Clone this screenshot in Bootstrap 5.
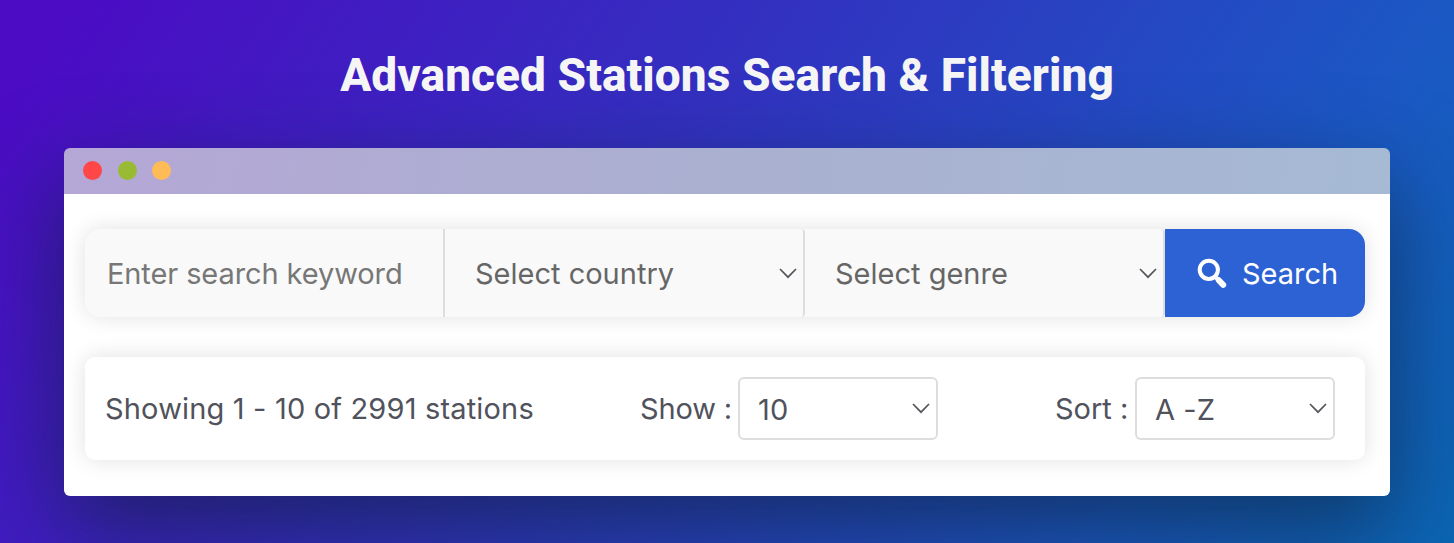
<!DOCTYPE html>
<html lang="en">
<head>
<meta charset="utf-8">
<title>Advanced Stations Search &amp; Filtering</title>
<link href="https://cdn.jsdelivr.net/npm/bootstrap@5.3.0/dist/css/bootstrap.min.css" rel="stylesheet">
<style>
body{font-family:Inter,"Liberation Sans",sans-serif;min-height:543px;overflow:hidden;color:#50525c;
background:linear-gradient(124deg,#4b0cc3 4%,#3330c0 42%,#1b58c4 80%,#0b66b4 100%)}
.hero-title{font:820 46px/54px Roboto,sans-serif;padding-top:48px;margin-bottom:46px;letter-spacing:.07px;color:#f5f5f5}
.browser{width:1326px;height:348px;border-radius:6px;box-shadow:0 34px 92px rgba(12,32,50,.62)}
.titlebar{height:46px;padding:0 0 2px 19px;gap:15.5px;background:linear-gradient(100deg,#b5a7d6,#aab0d0 50%,#a6bad4)}
.dot{width:19px;height:19px}
.window-body{height:302px;padding:35px 25px 0 21px}
.soft{box-shadow:0 0 22px rgba(0,0,0,.12)}
.search-row{height:88px;border-radius:16px;margin-bottom:40px;background:#f9f9f9}
.search-row .form-control,.search-row .form-select,.btn-search{font-size:29px;letter-spacing:0;border:0;height:88px;border-radius:0}
.search-row .form-control{flex:0 0 360px;width:360px;padding:0 0 0 22px;background:#f9f9f9;border-right:2px solid #dcdddd;border-radius:16px 0 0 16px;letter-spacing:-.1px}
.search-row .form-control::placeholder{color:#777;opacity:1}
.search-row .form-select{flex:0 0 360px;width:360px;padding:2px 30px 0 30px;color:#666;background-color:#f9f9f9;border-right:2px solid #dcdddd;border-radius:4px}
.form-select{background-image:url("data:image/svg+xml,%3Csvg xmlns='http://www.w3.org/2000/svg' viewBox='0 0 18 11'%3E%3Cpath fill='none' stroke='%2355565c' stroke-width='1.7' d='M1 1l8 8.2L17 1'/%3E%3C/svg%3E");background-size:18px 11px;background-position:right 6px center}
.btn-search{flex:0 0 200px;width:200px;background:#2c62d3;color:#fff;padding:0 0 0 32px;border-radius:0 16px 16px 0!important}
.btn-search svg{width:30px;height:31px;margin-right:15px;flex:none}
.btn-search span{padding-top:2px}
.results{height:103px;border-radius:10px;font-size:29px;padding:0 30px 0 20px}
.count-text{letter-spacing:.17px;width:535px}
.show-group{width:298px}
.show-group span{letter-spacing:-.15px}
.sort-group{width:280px;margin-left:auto}
.results .form-select{width:200px;height:63px;flex:none;margin-left:auto;border:2px solid #ddd;border-radius:6px;font-size:29px;color:#50525c;padding:3px 30px 0 18px;background-position:right 6px center;letter-spacing:.1px}
</style>
</head>
<body>
<h1 class="hero-title text-center">Advanced Stations Search &amp; Filtering</h1>
<main class="browser mx-auto">
  <div class="titlebar d-flex align-items-center rounded-top">
    <i class="dot rounded-circle" style="background:#ff4747"></i>
    <i class="dot rounded-circle" style="background:#99bb33"></i>
    <i class="dot rounded-circle" style="background:#ffbb55"></i>
  </div>
  <div class="window-body bg-white rounded-bottom">
    <form class="search-row soft d-flex">
      <input class="form-control" type="text" placeholder="Enter search keyword" aria-label="Keyword">
      <select class="form-select" aria-label="Country"><option>Select country</option></select>
      <select class="form-select" aria-label="Genre"><option>Select genre</option></select>
      <button type="button" class="btn btn-search d-flex align-items-center">
        <svg viewBox="0 0 30 31" fill="none" stroke="#fff"><circle cx="11.8" cy="11.8" r="9.1" stroke-width="4"/><path d="M18 18.5l3 3" stroke-width="4"/><path d="M21.8 22.3l4.4 4.6" stroke-width="6" stroke-linecap="round"/></svg>
        <span>Search</span>
      </button>
    </form>
    <div class="results soft d-flex align-items-center">
      <span class="count-text">Showing 1 - 10 of 2991 stations</span>
      <label class="show-group d-flex align-items-center text-nowrap"><span>Show :</span><select class="form-select"><option>10</option></select></label>
      <label class="sort-group d-flex align-items-center text-nowrap"><span>Sort :</span><select class="form-select"><option>A -Z</option></select></label>
    </div>
  </div>
</main>
<script src="https://cdn.jsdelivr.net/npm/bootstrap@5.3.0/dist/js/bootstrap.bundle.min.js"></script>
</body>
</html>
